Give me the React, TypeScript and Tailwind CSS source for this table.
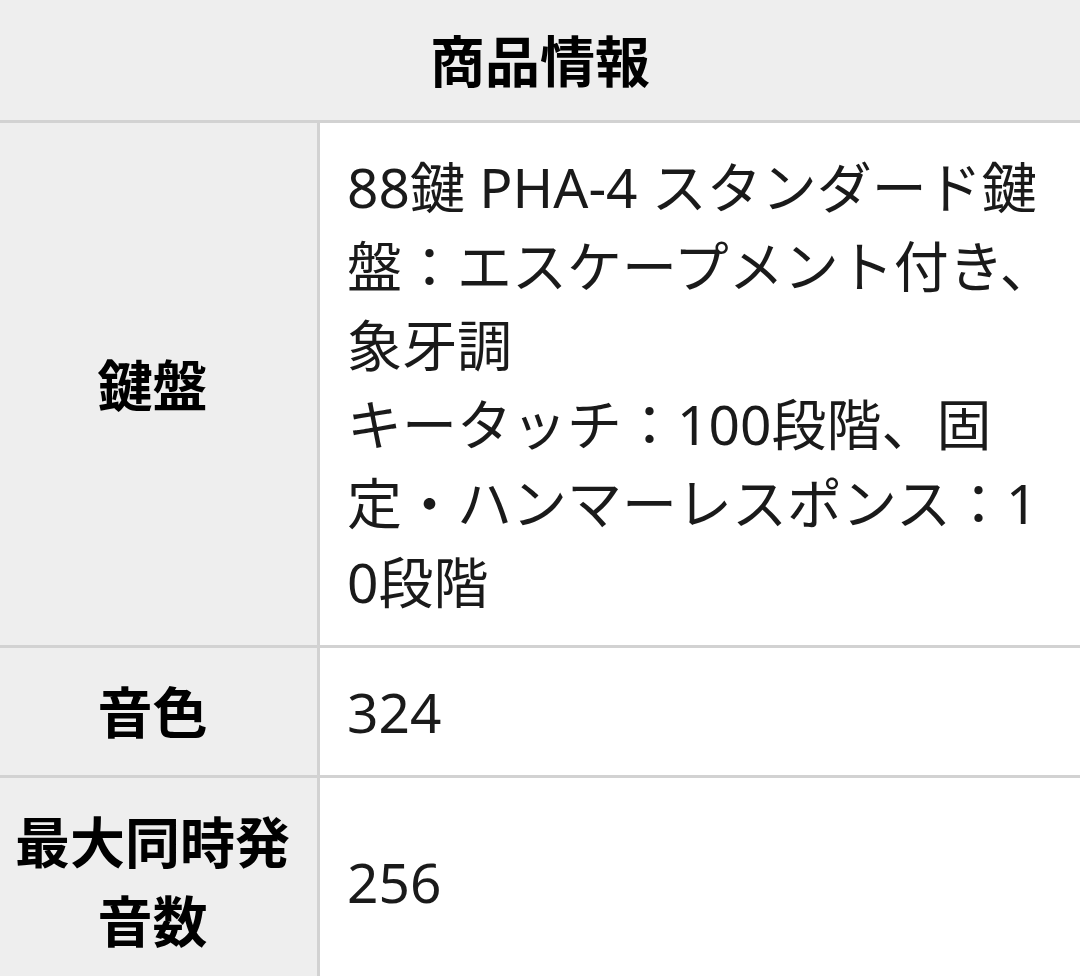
import React from "react";

const font = {
  fontFamily: '"Noto Sans", "Noto Sans CJK JP", sans-serif',
};

type Row = {
  label: string;
  value: React.ReactNode;
};

const rows: Row[] = [
  {
    label: "鍵盤",
    value: (
      <>
        88鍵 PHA-4 スタンダード鍵盤：エスケープメント付き、象牙調
        <br />
        キータッチ：100段階、固定・ハンマーレスポンス：10段階
      </>
    ),
  },
  { label: "音色", value: "324" },
  { label: "最大同時発音数", value: "256" },
];

export default function App() {
  return (
    <div className="w-[1080px] h-[976px] overflow-hidden bg-white text-[#1a1a1a]" style={font}>
      {/* Header */}
      <div className="h-[123px] flex items-center justify-center bg-[#eeeeee] border-b-[3px] border-[#d2d2d2]">
        <h1 className="text-[55px] font-bold leading-none text-black">商品情報</h1>
      </div>

      {rows.map((row) => (
        <div key={row.label} className="flex border-b-[3px] border-[#d2d2d2]">
          <div className="w-[320px] shrink-0 flex items-center justify-center bg-[#eeeeee] border-r-[3px] border-[#d2d2d2] pr-[16px] pl-[4px] py-[24px]">
            <span className="text-[55px] font-bold leading-[79px] text-center text-black">
              {row.label}
            </span>
          </div>
          <div className="flex-1 flex items-center pl-[27px] pr-[22px] py-[24px]">
            <p className="text-[55px] leading-[79px] break-all">{row.value}</p>
          </div>
        </div>
      ))}
    </div>
  );
}
